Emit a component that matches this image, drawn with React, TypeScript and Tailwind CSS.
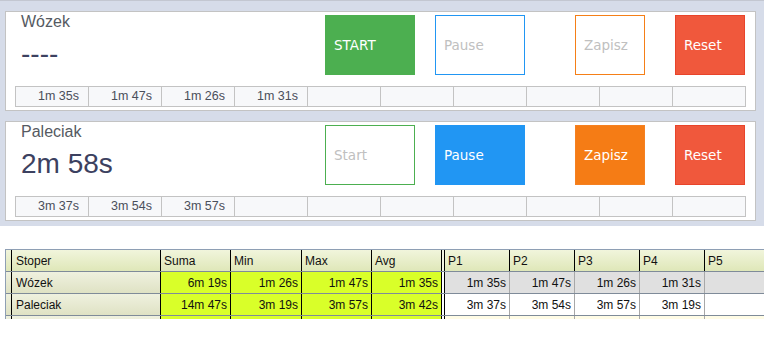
import clsx from 'clsx'

type BtnProps = { label: string; filled: boolean; className: string; w: string }

const StopButton = ({ label, filled, className, w }: BtnProps): JSX.Element => (
  <button
    type="button"
    className={clsx(
      'h-[60px] border text-left pl-[8px] text-[13.5px] font-["DejaVu_Sans",sans-serif]',
      w,
      filled ? 'text-white' : 'text-[#c0c0c0] bg-white',
      className
    )}
  >
    {label}
  </button>
)

type PanelProps = {
  name: string
  time: string
  running: boolean
  laps: string[]
}

const Panel = ({ name, time, running, laps }: PanelProps): JSX.Element => {
  const cells = [...laps, ...Array(10 - laps.length).fill('')]
  return (
    <div className="ml-[5px] w-[751px] h-[100px] bg-white border border-[#c3c3c3] font-['Liberation_Sans',sans-serif]">
      <div className="flex items-start">
        <div className="w-[319px] pl-[15px]">
          <div className="text-[16px] leading-[20px] text-[#555a62]">{name}</div>
          <div className="mt-[6px] text-[28px] leading-[32px] text-[#3c4160]">{time}</div>
        </div>
        <div className="flex mt-[3px]">
          <StopButton
            label={running ? 'Start' : 'START'}
            filled={!running}
            w="w-[90px]"
            className={running ? 'border-[#4caf50]' : 'bg-[#4caf50] border-[#4caf50]'}
          />
          <StopButton
            label="Pause"
            filled={running}
            w="w-[90px] ml-[20px]"
            className={running ? 'bg-[#2196f3] border-[#2196f3]' : 'border-[#2196f3]'}
          />
          <StopButton
            label="Zapisz"
            filled={running}
            w="w-[70px] ml-[50px]"
            className={running ? 'bg-[#f57c15] border-[#f58020]' : 'border-[#f57f17]'}
          />
          <StopButton
            label="Reset"
            filled
            w="w-[70px] ml-[30px]"
            className="bg-[#f0583c] border-[#e8442a]"
          />
        </div>
      </div>
      <div className="ml-[9px] mt-[11px] flex w-[731px] h-[21px] border border-[#c3c3c3] bg-[#f7f8fa]">
        {cells.map((lap, i) => (
          <div
            key={i}
            className={clsx(
              'h-full text-right pr-[9px] text-[12.5px] leading-[19px] text-[#4a4f5a]',
              i === 0 ? 'w-[72px]' : 'w-[73px] border-l border-[#c3c3c3]'
            )}
          >
            {lap}
          </div>
        ))}
      </div>
    </div>
  )
}

const rows = [
  {
    name: 'Wózek',
    stats: ['6m 19s', '1m 26s', '1m 47s', '1m 35s'],
    laps: ['1m 35s', '1m 47s', '1m 26s', '1m 31s', ''],
    bg: 'bg-[#e0e0e0]'
  },
  {
    name: 'Paleciak',
    stats: ['14m 47s', '3m 19s', '3m 57s', '3m 42s'],
    laps: ['3m 37s', '3m 54s', '3m 57s', '3m 19s', ''],
    bg: 'bg-white'
  },
  {
    name: '',
    stats: ['', '', '', ''],
    laps: ['', '', '', '', ''],
    bg: 'bg-[#fffce6]'
  }
]

const statCols = ['Suma', 'Min', 'Max', 'Avg']
const statW = ['w-[70px]', 'w-[71px]', 'w-[70px]', 'w-[70px]']
const lapCols = ['P1', 'P2', 'P3', 'P4', 'P5']
const lapW = ['w-[66px] border-l', 'w-[65px]', 'w-[65px]', 'w-[65px]', 'w-[70px]']

const headBg = 'bg-gradient-to-b from-[#f1f5dc] to-[#dfe7b8]'
const rowHeadBg = 'bg-gradient-to-b from-[#eff1df] to-[#dfe2c4]'

const StatsTable = (): JSX.Element => (
  <div className="ml-[5px] mt-[23px] h-[70px] overflow-hidden border-t border-l border-[#8e9fb4] font-['Liberation_Sans',sans-serif] text-[12px] text-[#111]">
    <div className={clsx('flex h-[22px] border-b border-[#7f8b99]', headBg)}>
      <div className="shrink-0 w-[6px] border-r border-black" />
      <div className="shrink-0 w-[149px] border-r border-black pl-[4px] leading-[22px]">Stoper</div>
      {statCols.map((c, i) => (
        <div key={c} className={clsx(statW[i], 'shrink-0 border-r border-black pl-[3px] leading-[22px]')}>
          {c}
        </div>
      ))}
      <div className="shrink-0 w-[2px] bg-[#f3f5e4]" />
      {lapCols.map((c, i) => (
        <div key={c} className={clsx(lapW[i], 'shrink-0 border-r border-black pl-[3px] leading-[22px]')}>
          {c}
        </div>
      ))}
    </div>
    {rows.map((r, ri) => (
      <div key={ri} className="flex h-[22px] border-b border-[#7f8b99]">
        <div className={clsx('shrink-0 w-[6px] border-r border-black', rowHeadBg)} />
        <div className={clsx('shrink-0 w-[149px] border-r border-black pl-[4px] leading-[22px]', rowHeadBg)}>
          {r.name}
        </div>
        {r.stats.map((s, i) => (
          <div
            key={i}
            className={clsx(statW[i], 'shrink-0 border-r border-black bg-[#d9ff29] text-right pr-[3px] leading-[22px]')}
          >
            {s}
          </div>
        ))}
        <div className="shrink-0 w-[2px] bg-white" />
        {r.laps.map((l, i) => (
          <div
            key={i}
            className={clsx(
              lapW[i],
              r.bg,
              'shrink-0 border-r border-[#a8a8a8] text-right pr-[3px] leading-[22px]',
              i === 0 && 'border-l-black'
            )}
          >
            {l}
          </div>
        ))}
      </div>
    ))}
  </div>
)

export default function App(): JSX.Element {
  return (
    <div className="w-[764px] h-[344px] bg-white overflow-hidden">
      <div className="h-[226px] bg-[#d6dce9] border-t border-[#c3c7d1] pt-[10px]">
        <Panel name="Wózek" time="----" running={false} laps={['1m 35s', '1m 47s', '1m 26s', '1m 31s']} />
        <div className="mt-[10px]">
          <Panel name="Paleciak" time="2m 58s" running laps={['3m 37s', '3m 54s', '3m 57s']} />
        </div>
      </div>
      <StatsTable />
    </div>
  )
}
